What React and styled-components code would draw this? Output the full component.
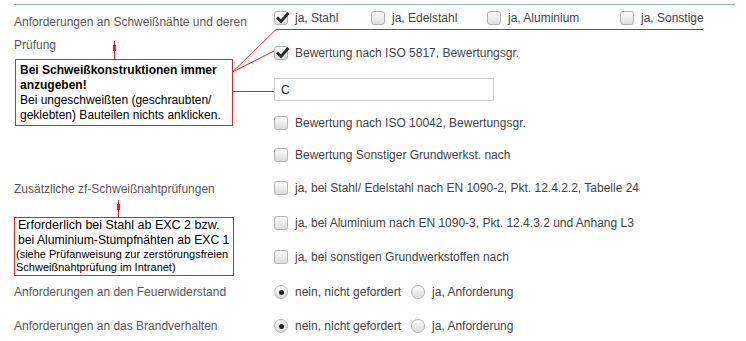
import React from "react";
import styled, { createGlobalStyle } from "styled-components";

const Global = createGlobalStyle`
  html, body { margin: 0; padding: 0; background: #fff; }
  body { font-family: "Liberation Sans", Arial, sans-serif; font-size: 12px; color: #444; }
`;

const Page = styled.div`
  position: relative;
  width: 746px;
  height: 341px;
  overflow: hidden;
`;

const Section = styled.div`
  margin: 4px 11px 0 14px;
  border-top: 1px solid #8fb0bf;
  display: flex;
`;

const LeftCol = styled.div`
  width: 260px;
  display: flex;
  flex-direction: column;
  align-items: flex-start;
`;

const RightCol = styled.div`
  flex: 1;
  display: flex;
  flex-direction: column;
  align-items: flex-start;
`;

const Label = styled.div`
  margin-top: ${(p) => p.$mt}px;
  line-height: ${(p) => p.$lh || 20}px;
  color: #585858;
  white-space: nowrap;
`;

const Note = styled.div`
  margin-top: ${(p) => p.$mt}px;
  margin-left: ${(p) => p.$ml || 0}px;
  width: ${(p) => p.$w}px;
  box-sizing: border-box;
  border: 1px solid #e2232b;
  padding: ${(p) => p.$pad};
  color: #000;
  line-height: 15px;
  white-space: nowrap;
`;

const Strong = styled.div`
  font-weight: bold;
`;

const NoteLine = styled.div`
  padding-left: ${(p) => p.$indent || 0}px;
  font-size: ${(p) => p.$fs || 12}px;
  line-height: ${(p) => p.$lh || 15}px;
`;

const Row = styled.div`
  margin-top: ${(p) => p.$mt}px;
  height: 20px;
  display: flex;
  align-items: center;
`;

const OptionGrid = styled.div`
  margin-top: ${(p) => p.$mt}px;
  height: 20px;
  display: grid;
  grid-template-columns: 97px 116px 133px auto;
  align-items: center;
`;

const Option = styled.label`
  display: flex;
  align-items: center;
  gap: 7px;
  color: #444;
  white-space: nowrap;
  margin-right: ${(p) => p.$mr || 0}px;
`;

const Box = styled.span`
  position: relative;
  width: 14px;
  height: 14px;
  box-sizing: border-box;
  border: 1px solid #b3b3b3;
  border-radius: ${(p) => (p.$round ? "50%" : "3px")};
  background: linear-gradient(#fbfbfb, #dcdcdc);
  box-shadow: inset 0 1px 0 #fff;
  flex: none;
  display: flex;
  align-items: center;
  justify-content: center;
`;

const Dot = styled.span`
  width: 5px;
  height: 5px;
  border-radius: 50%;
  background: #222;
`;

const Check = styled.svg`
  position: absolute;
  left: 1px;
  top: 0px;
`;

const TextInput = styled.div`
  margin-top: ${(p) => p.$mt}px;
  width: 220px;
  height: 23px;
  box-sizing: border-box;
  border: 1px solid #cfcfcf;
  padding-left: 6px;
  display: flex;
  align-items: center;
  color: #222;
  font-size: 12px;
`;

const Overlay = styled.svg`
  position: absolute;
  left: 0;
  top: 0;
  pointer-events: none;
`;

function Checkbox({ checked, children, mr }) {
  return (
    <Option $mr={mr}>
      <Box>
        {checked && (
          <Check width="13" height="12" viewBox="0 0 13 12">
            <path d="M2 6.5 L5 9.5 L11.5 2" fill="none" stroke="#2b2b2b" strokeWidth="2.8" strokeLinecap="square" />
          </Check>
        )}
      </Box>
      {children}
    </Option>
  );
}

function Radio({ checked, children, mr }) {
  return (
    <Option $mr={mr}>
      <Box $round>{checked && <Dot />}</Box>
      {children}
    </Option>
  );
}

function Arrow({ x, top, bottom }) {
  return (
    <g fill="#e2232b">
      <rect x={x} y={top} width="1" height={bottom - top} />
      <rect x={x - 1} y={top + 4} width="3" height="6" />
    </g>
  );
}

export default function App() {
  return (
    <Page>
      <Global />
      <Section>
        <LeftCol>
          <Label $mt={6} $lh={23}>
            Anforderungen an Schweißnähte und deren
            <br />
            Prüfung
          </Label>
          <Note $mt={2} $ml={1} $w={218} $pad="3px 4px 2px 4px">
            <Strong>Bei Schweißkonstruktionen immer</Strong>
            <Strong>anzugeben!</Strong>
            <NoteLine>Bei ungeschweißten (geschraubten/</NoteLine>
            <NoteLine>geklebten) Bauteilen nichts anklicken.</NoteLine>
          </Note>
          <Label $mt={53}>Zusätzliche zf-Schweißnahtprüfungen</Label>
          <Note $mt={18} $w={220} $pad="0 1px 1px 1px">
            <NoteLine $indent={2} $fs={12.5} $lh={14}>Erforderlich bei Stahl ab EXC 2 bzw.</NoteLine>
            <NoteLine $indent={2} $fs={12.2} $lh={16}>bei Aluminium-Stumpfnähten ab EXC 1</NoteLine>
            <NoteLine $fs={11} $lh={13}>(siehe Prüfanweisung zur zerstörungsfreien</NoteLine>
            <NoteLine $fs={11} $lh={13}>Schweißnahtprüfung im Intranet)</NoteLine>
          </Note>
          <Label $mt={6}>Anforderungen an den Feuerwiderstand</Label>
          <Label $mt={14}>Anforderungen an das Brandverhalten</Label>
        </LeftCol>
        <RightCol>
          <OptionGrid $mt={3}>
            <Checkbox checked>ja, Stahl</Checkbox>
            <Checkbox>ja, Edelstahl</Checkbox>
            <Checkbox>ja, Aluminium</Checkbox>
            <Checkbox>ja, Sonstige</Checkbox>
          </OptionGrid>
          <Row $mt={15}>
            <Checkbox checked>Bewertung nach ISO 5817, Bewertungsgr.</Checkbox>
          </Row>
          <TextInput $mt={15}>C</TextInput>
          <Row $mt={12}>
            <Checkbox>Bewertung nach ISO 10042, Bewertungsgr.</Checkbox>
          </Row>
          <Row $mt={12}>
            <Checkbox>Bewertung Sonstiger Grundwerkst. nach</Checkbox>
          </Row>
          <Row $mt={13}>
            <Checkbox>ja, bei Stahl/ Edelstahl nach EN 1090-2, Pkt. 12.4.2.2, Tabelle 24</Checkbox>
          </Row>
          <Row $mt={15}>
            <Checkbox>ja, bei Aluminium nach EN 1090-3, Pkt. 12.4.3.2 und Anhang L3</Checkbox>
          </Row>
          <Row $mt={14}>
            <Checkbox>ja, bei sonstigen Grundwerkstoffen nach</Checkbox>
          </Row>
          <Row $mt={15}>
            <Radio checked mr={10}>nein, nicht gefordert</Radio>
            <Radio>ja, Anforderung</Radio>
          </Row>
          <Row $mt={14}>
            <Radio checked mr={10}>nein, nicht gefordert</Radio>
            <Radio>ja, Anforderung</Radio>
          </Row>
        </RightCol>
      </Section>
      <Overlay width="746" height="341" viewBox="0 0 746 341">
        <g stroke="#e2232b" strokeWidth="1" fill="none">
          <path d="M276 29.5 H703" />
          <path d="M232.5 72 L276 29.5" />
          <path d="M232.5 72 L274 51" />
          <path d="M232.5 91.5 H274" />
        </g>
        <Arrow x={114} top={41} bottom={59} />
        <Arrow x={118} top={200} bottom={218} />
      </Overlay>
    </Page>
  );
}
